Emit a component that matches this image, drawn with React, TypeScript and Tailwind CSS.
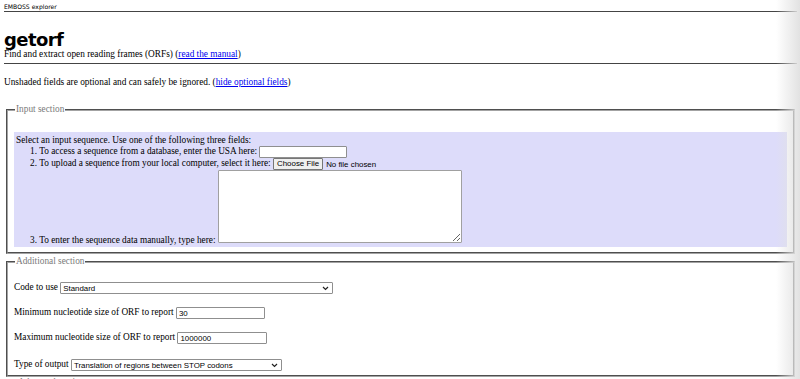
import React from 'react';

const serif = "font-['Liberation_Serif','Times_New_Roman',serif]";
const sans = "font-['Liberation_Sans',Arial,sans-serif]";

function Chevron() {
  return (
    <svg width="7" height="5" viewBox="0 0 7 5" className="shrink-0">
      <path d="M1 1 L3.5 3.5 L6 1" fill="none" stroke="#222" strokeWidth="1.2" />
    </svg>
  );
}

function FakeSelect({ value, width }: { value: string; width: string }) {
  return (
    <span
      className={`inline-flex ${width} h-[12px] items-center justify-between border border-[#8f8f8f] rounded-[1px] bg-white pl-[2px] pr-[3px] align-middle ${sans} text-[7.9px] text-black`}
    >
      <span>{value}</span>
      <Chevron />
    </span>
  );
}

function TextBox({ value, width }: { value?: string; width: string }) {
  return (
    <input
      readOnly
      value={value ?? ''}
      className={`${width} h-[12px] border border-[#8f8f8f] rounded-[1px] bg-white px-[2px] align-middle ${sans} text-[7.9px] text-black`}
    />
  );
}

export default function App() {
  return (
    <div className={`relative w-[800px] h-[379px] overflow-hidden bg-white text-black ${serif} text-[9.3px] leading-[11px]`}>
      <div className="pl-[4px] pr-[3px]">
        {/* Header */}
        <div className="pt-[3px] pb-[1px] border-b border-[#444] font-['DejaVu_Sans',Verdana,sans-serif] text-[6.1px] leading-[7px]">
          EMBOSS explorer
        </div>
        <h1 className="mt-[18px] font-['DejaVu_Sans',Verdana,sans-serif] font-bold text-[18px] leading-[19px] tracking-[-0.6px]">getorf</h1>
        <div className="pb-[3px] border-b border-[#444]">
          Find and extract open reading frames (ORFs) (
          <a href="#" className="text-[#0000ee] underline">read the manual</a>)
        </div>
        <p className="mt-[13px]">
          Unshaded fields are optional and can safely be ignored. (
          <a href="#" className="text-[#0000ee] underline">hide optional fields</a>)
        </p>

        {/* Input section */}
        <fieldset className="mt-[16px] mx-[2px] border-2 border-[#a3a3a3] [border-style:groove] px-[6px] pb-[5px]">
          <legend className="px-[1px] ml-[1px] text-[#7a7a7a]">Input section</legend>
          <div className="h-[17px]" />
          <div className="bg-[#dddcfa] pl-[2px] pt-[3px] pb-[1px]">
            <div>Select an input sequence. Use one of the following three fields:</div>
            <ol className="pl-[14px]">
              <li className="h-[12px]">
                1. To access a sequence from a database, enter the USA here:{' '}
                <TextBox width="w-[88px]" />
              </li>
              <li className="h-[12px]">
                2. To upload a sequence from your local computer, select it here:{' '}
                <span className={`inline-flex items-center gap-[3px] align-middle ${sans} text-[7.9px]`}>
                  <span className="border border-[#767676] rounded-[1px] bg-[#efefef] px-[3px] h-[12px] leading-[10px]">Choose File</span>
                  <span>No file chosen</span>
                </span>
              </li>
              <li>
                3. To enter the sequence data manually, type here:{' '}
                <textarea
                  readOnly
                  className="w-[244px] h-[73px] border border-[#a0a0a0] rounded-[1px] bg-white align-baseline resize-y"
                />
              </li>
            </ol>
          </div>
        </fieldset>

        {/* Additional section */}
        <fieldset className="mt-[2px] mx-[2px] border-2 border-[#a3a3a3] [border-style:groove] px-[6px] pb-[4px]">
          <legend className="px-[1px] ml-[1px] text-[#7a7a7a]">Additional section</legend>
          <div>
            <p className="mt-[15px]">
              Code to use <FakeSelect value="Standard" width="w-[273px]" />
            </p>
            <p className="mt-[13px]">
              Minimum nucleotide size of ORF to report <TextBox value="30" width="w-[89px]" />
            </p>
            <p className="mt-[13px]">
              Maximum nucleotide size of ORF to report <TextBox value="1000000" width="w-[90px]" />
            </p>
            <p className="mt-[15px]">
              Type of output <FakeSelect value="Translation of regions between STOP codons" width="w-[211px]" />
            </p>
          </div>
        </fieldset>
        <div className="pl-[14px] text-[#808080]">Advanced section</div>
      </div>

      {/* right edge shading */}
      <div className="pointer-events-none absolute right-0 top-0 h-full w-[24px] bg-linear-to-r from-transparent to-[#e2e2e2]" />
    </div>
  );
}
